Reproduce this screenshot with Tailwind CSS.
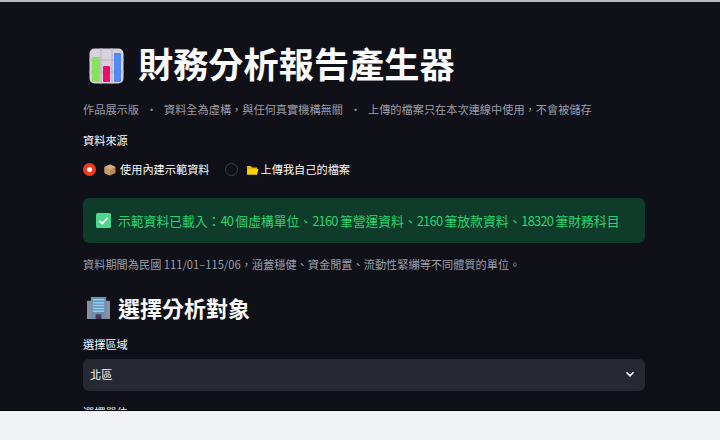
<!DOCTYPE html>
<html lang="zh-TW">
<head>
    <meta charset="UTF-8">
    <title>財務分析報告產生器</title>
    <script src="https://cdn.jsdelivr.net/npm/@tailwindcss/browser@4"></script>
</head>
<body class="w-[720px] h-[440px] overflow-hidden bg-[#f0f2f6] font-['Noto_Sans_CJK_TC','Noto_Sans',sans-serif]">
    <div class="h-[2px] bg-[#b8b8ba]"></div>
    <!-- Main dark area -->
    <main class="h-[409px] bg-[#0f1018] overflow-hidden pl-[83px] pr-[75px] border-b border-[#050505]">
        <!-- Title -->
        <h1 class="flex items-center h-[44px] mt-[39px] text-[35.2px] leading-[44px] font-bold text-[#fafafa]">
            <svg class="self-start mt-[7px] ml-[6px] mr-[14px] w-[35px] h-[36px]" viewBox="0 0 35 36">
                <rect x="0.5" y="0.5" width="34" height="35" rx="5" fill="#d9d0de"/>
                <path d="M0 12H35M0 24H35M12 0V36M23 0V36" stroke="#bdb0c8" stroke-width="1"/>
                <rect x="3" y="9" width="8" height="25" rx="1" fill="#86e25c"/>
                <rect x="14" y="18" width="7" height="16" rx="1" fill="#e8106a"/>
                <rect x="25" y="5" width="7" height="29" rx="1" fill="#4f8bf0"/>
            </svg>
            財務分析報告產生器
        </h1>
        <!-- Caption -->
        <p class="flex mt-[16px] h-[17px] text-[11.2px] leading-[17px] text-[#9b9ea8]">
            <span>作品展示版</span>
            <span class="mx-[7px] w-[11px] text-center">·</span>
            <span>資料全為虛構，與任何真實機構無關</span>
            <span class="mx-[7px] w-[11px] text-center">·</span>
            <span>上傳的檔案只在本次連線中使用，不會被儲存</span>
        </p>
        <!-- Data source -->
        <p class="mt-[14px] h-[17px] text-[11.2px] leading-[17px] text-[#fafafa]">資料來源</p>
        <div class="flex items-center mt-[12px] h-[17px] text-[11.2px] leading-[17px] text-[#fafafa]">
            <span class="flex items-center justify-center w-[13px] h-[13px] rounded-full bg-[#f5391f]">
                <span class="w-[5px] h-[5px] rounded-full bg-white"></span>
            </span>
            <svg class="ml-[8px] mr-[4px] w-[12px] h-[12px]" viewBox="0 0 12 12">
                <path d="M6 .5 11.5 3v6L6 11.5.5 9V3Z" fill="#b98a58"/>
                <path d="M6 .5 11.5 3 6 5.5.5 3Z" fill="#d9ae7c"/>
                <path d="M6 5.5v6L.5 9V3Z" fill="#c99a66"/>
            </svg>
            <span>使用內建示範資料</span>
            <span class="ml-[15px] w-[13px] h-[13px] rounded-full bg-[#0f1018] border border-[#3a3d47]"></span>
            <svg class="ml-[8px] mr-[2px] w-[13px] h-[12px]" viewBox="0 0 13 12">
                <path d="M1 2h4l1 1.5h5V10.5H1Z" fill="#f0b400"/>
                <path d="M2.5 5H12.5L11 10.5H1Z" fill="#ffd500"/>
            </svg>
            <span>上傳我自己的檔案</span>
        </div>
        <!-- Success alert -->
        <div class="flex items-center mt-[20px] h-[45px] px-[13px] rounded-[6px] bg-[#0e3b2a] text-[12.8px] text-[#2ad672] whitespace-nowrap">
            <svg class="mr-[7px] w-[15px] h-[15px]" viewBox="0 0 15 15">
                <rect width="15" height="15" rx="1.5" fill="#4fd68c"/>
                <path d="M3.5 7.8 6.3 10.5 11.5 5" fill="none" stroke="#fff" stroke-width="1.6"/>
            </svg>
            <span>示範資料已載入：<span class="tracking-[-0.7px]">40 </span>個虛構單位、<span class="tracking-[-0.7px]">2160 </span>筆營運資料、<span class="tracking-[-0.7px]">2160 </span>筆放款資料、<span class="tracking-[-0.7px]">18320 </span>筆財務科目</span>
        </div>
        <p class="mt-[13px] h-[17px] text-[11.2px] leading-[17px] text-[#9b9ea8]">資料期間為民國 111/01–115/06，涵蓋穩健、資金閒置、流動性緊繃等不同體質的單位。</p>
        <!-- Section heading -->
        <h2 class="flex items-center mt-[19px] h-[30px] text-[22px] leading-[30px] font-bold text-[#fafafa]">
            <svg class="ml-[4px] mr-[8px] w-[23px] h-[23px]" viewBox="0 0 24 24">
                <rect x="0" y="5" width="24" height="19" fill="#8d8f9c"/>
                <rect x="4" y="1" width="16" height="23" fill="#6d8fb0"/>
                <path d="M6 4h12M6 7h12M6 10h12M6 13h12M6 16h12" stroke="#8fd0ee" stroke-width="1.6"/>
                <rect x="9" y="19" width="6" height="5" fill="#4a3a5a"/>
            </svg>
            選擇分析對象
        </h2>
        <p class="mt-[14px] h-[17px] text-[11.2px] leading-[17px] text-[#fafafa]">選擇區域</p>
        <!-- Select -->
        <div class="flex items-center justify-between mt-[6px] h-[32px] pb-[2px] pl-[7px] pr-[10px] rounded-[6px] bg-[#282833] text-[11.2px] text-[#fafafa]">
            <span>北區</span>
            <svg class="w-[10px] h-[10px]" viewBox="0 0 10 10">
                <path d="M1.5 3.2 5 6.8 8.5 3.2" fill="none" stroke="#fafafa" stroke-width="1.5"/>
            </svg>
        </div>
        <p class="mt-[13px] h-[17px] text-[11.2px] leading-[17px] text-[#fafafa]">選擇單位</p>
    </main>
</body>
</html>
